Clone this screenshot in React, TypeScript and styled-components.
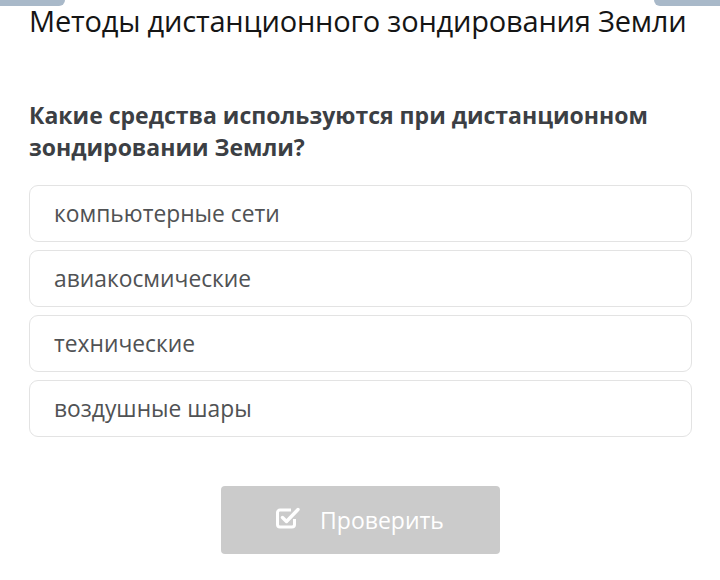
import styled, { createGlobalStyle } from "styled-components";

const GlobalStyle = createGlobalStyle`
  html, body {
    margin: 0;
    padding: 0;
    background: #ffffff;
  }
  body {
    font-family: "Open Sans", "Noto Sans", sans-serif;
    width: 720px;
    height: 580px;
    overflow: hidden;
  }
`;

const OPTIONS = [
  "компьютерные сети",
  "авиакосмические",
  "технические",
  "воздушные шары",
];

function CheckIcon() {
  return (
    <svg width="24" height="22" viewBox="0 0 24 22" fill="none">
      <path
        d="M18.5 12V17.5a2.5 2.5 0 0 1-2.5 2.5H4a2.5 2.5 0 0 1-2.5-2.5V5.5A2.5 2.5 0 0 1 4 3h11"
        stroke="#fff"
        strokeWidth="3"
        strokeLinejoin="round"
      />
      <path
        d="M6.5 10.5l4 4L22 2.5"
        stroke="#fff"
        strokeWidth="3.4"
        strokeLinecap="round"
        strokeLinejoin="round"
      />
    </svg>
  );
}

function App() {
  return (
    <>
      <GlobalStyle />
      <Page>
        <TopTabs>
          <Tab $side="left" />
          <Tab $side="right" />
        </TopTabs>
        <Title>Методы дистанционного зондирования Земли</Title>
        <Question>
          Какие средства используются при дистанционном зондировании Земли?
        </Question>
        <OptionList>
          {OPTIONS.map((o) => (
            <Option key={o}>{o}</Option>
          ))}
        </OptionList>
        <Footer>
          <CheckButton disabled>
            <CheckIcon />
            <span>Проверить</span>
          </CheckButton>
        </Footer>
      </Page>
    </>
  );
}

const Page = styled.div`
  position: relative;
  width: 720px;
  height: 580px;
  padding: 0 28px 0 29px;
  box-sizing: border-box;
`;

const TopTabs = styled.div`
  position: absolute;
  top: 0;
  left: 0;
  right: 0;
  display: flex;
  justify-content: space-between;
`;

const Tab = styled.div<{ $side: "left" | "right" }>`
  width: ${(p) => (p.$side === "left" ? "65px" : "66px")};
  height: 6px;
  background: #a9b9c9;
  border-radius: ${(p) => (p.$side === "left" ? "0 0 6px 0" : "0 0 0 6px")};
`;

const Title = styled.h1`
  margin: 0;
  font-size: 29px;
  font-weight: 400;
  line-height: 42px;
  color: #151515;
  white-space: nowrap;
  letter-spacing: -0.2px;
`;

const Question = styled.h2`
  margin: 57px 0 0;
  font-size: 23px;
  font-weight: 700;
  line-height: 32px;
  color: #3c3f44;
  max-width: 640px;
`;

const OptionList = styled.div`
  margin-top: 22px;
  display: flex;
  flex-direction: column;
  gap: 8px;
`;

const Option = styled.div`
  height: 57px;
  box-sizing: border-box;
  border: 1px solid #e3e3e3;
  border-radius: 9px;
  display: flex;
  align-items: center;
  padding-left: 24px;
  font-size: 22.8px;
  color: #505254;
`;

const Footer = styled.div`
  margin-top: 49px;
  display: flex;
  justify-content: center;
  padding-right: 1px;
`;

const CheckButton = styled.button`
  width: 279px;
  height: 68px;
  border: none;
  border-radius: 4px;
  background: #cbcbcb;
  color: #ffffff;
  font-family: "Open Sans", "Noto Sans", sans-serif;
  font-size: 23px;
  display: flex;
  align-items: center;
  justify-content: center;
  gap: 20px;
  padding: 0 0 0 0;

  svg {
    margin-top: -4px;
  }
`;

export default App;
